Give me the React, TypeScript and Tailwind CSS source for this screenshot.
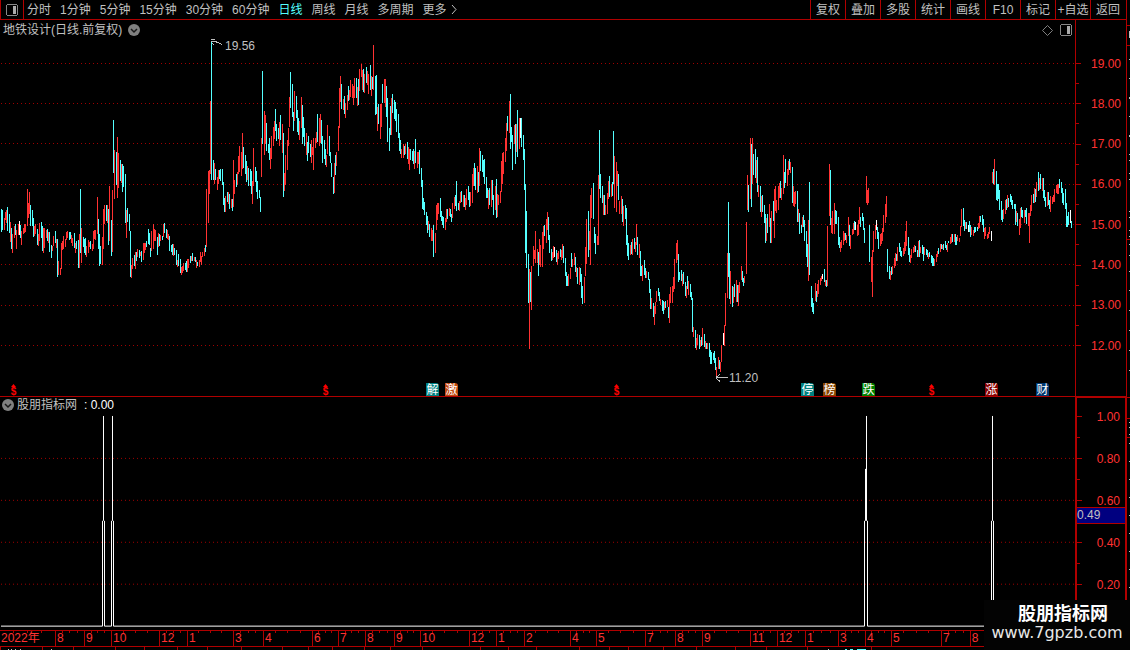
const periods = [
  "分时",
  "1分钟",
  "5分钟",
  "15分钟",
  "30分钟",
  "60分钟",
  "日线",
  "周线",
  "月线",
  "多周期",
];

const tools = ["复权", "叠加", "多股", "统计", "画线", "F10", "标记", "+自选", "返回"];

// start of every labelled month on the time axis
const months: [number, string][] = [
  [0, "2022年"],
  [55, "8"],
  [84, "9"],
  [111, "10"],
  [159, "12"],
  [187, "1"],
  [233, "3"],
  [263, "4"],
  [312, "6"],
  [338, "7"],
  [365, "8"],
  [394, "9"],
  [420, "10"],
  [469, "12"],
  [496, "1"],
  [524, "2"],
  [570, "4"],
  [596, "5"],
  [645, "7"],
  [675, "8"],
  [702, "9"],
  [750, "11"],
  [777, "12"],
  [805, "1"],
  [838, "3"],
  [865, "4"],
  [891, "5"],
  [941, "7"],
  [970, "8"],
];

const priceLabels = ["19.00", "18.00", "17.00", "16.00", "15.00", "14.00", "13.00", "12.00"];
const signalLabels = ["1.00", "0.80", "0.60", "0.40", "0.20"];
const priceGrid = [63, 103, 143, 184, 224, 264, 305, 345];
const signalGrid = [458, 500, 542, 584];

const dividends = [10, 322, 613, 928];

const events = [
  { x: 426, text: "解", color: "bg-[#008080]" },
  { x: 445, text: "激", color: "bg-[#c04810]" },
  { x: 801, text: "停", color: "bg-[#008080]" },
  { x: 823, text: "榜", color: "bg-[#884400]" },
  { x: 862, text: "跌", color: "bg-[#008000]" },
  { x: 985, text: "涨", color: "bg-[#880000]" },
  { x: 1036, text: "财", color: "bg-[#003870]" },
];

// colour, x, high, low (r = up, c = down, w = flat)
const bars = `
c1,209,232 c2,210,230 r4,218,230 r5,212,220 r6,210,223 c7,207,231 c9,214,233 r10,222,242 c11,228,249 r12,234,253
r14,226,238 c15,224,235 r16,230,249 r18,224,235 w19,221,235 c20,225,238 r21,231,245 r23,228,234 r24,224,233 r25,224,232
r27,189,226 r28,203,218 r29,192,214 c30,205,226 c32,210,226 c33,218,237 r34,226,236 r35,224,234 c37,229,245 r38,234,246
r39,223,241 c41,222,238 c42,226,251 r43,228,253 r44,228,248 r46,230,238 c47,229,241 r48,232,243 c49,232,252 c51,245,258
r52,246,251 r53,236,246 c55,231,243 r56,239,248 c57,239,277 r58,261,275 r60,268,275 r61,243,269 r62,241,250 r63,236,249
r65,239,247 r66,232,240 r67,231,238 c69,232,240 c70,232,239 r71,235,243 r72,238,246 c74,233,248 r75,243,253 c76,241,249
c78,240,268 r79,234,268 c80,189,253 r81,228,263 c83,237,247 c84,239,253 c85,238,255 r86,246,257 r88,240,253 r89,242,247
c90,241,249 r92,244,251 r93,231,249 r94,230,239 r95,230,240 r97,197,234 c98,219,249 c99,234,266 c100,246,264 r102,237,265
r103,209,249 r104,205,224 c106,205,221 r107,205,223 c108,209,245 r109,186,241 c111,220,256 r112,190,252 c113,120,173 r114,150,199
c116,152,185 r117,137,198 r118,153,188 c120,160,181 r121,164,183 c122,164,192 c123,166,187 c125,174,223 r126,210,238 c127,208,222
c129,214,231 c130,231,277 r131,265,278 r132,258,269 c134,255,266 r135,252,269 c136,252,261 r137,249,257 c139,250,258 r140,252,256
c141,251,262 r143,243,260 r144,243,253 r145,243,250 c146,241,247 c148,229,244 c149,233,245 c150,248,257 r151,231,251 r153,224,249
r154,229,241 r155,230,241 c157,237,255 r158,233,247 c159,234,246 r160,235,241 c162,236,240 r163,224,237 c164,223,233 c166,229,238
r167,230,239 r168,234,240 c169,236,251 c171,245,252 c172,244,255 r173,244,256 c174,248,255 c176,250,265 r177,260,267 c178,254,266
c180,259,273 r181,267,275 r182,266,273 r183,263,271 c185,263,270 c186,261,272 r187,259,272 r188,259,268 c190,256,263 r191,256,261
c192,253,261 r194,257,261 c195,257,262 r196,260,268 c197,262,266 r199,260,267 r200,252,262 r201,256,265 r202,252,257 r204,248,256
c205,245,252 r206,189,247 r208,171,223 r209,170,194 r210,101,174 c211,42,180 c213,160,180 r214,163,184 c215,169,180 r217,177,190
r218,170,184 c219,170,179 c220,169,181 c222,169,185 c223,182,205 c224,198,212 r225,196,212 c227,192,202 r228,192,204 c229,194,209
r231,199,208 c232,199,211 r233,160,207 r234,180,194 c236,174,187 r237,172,185 r238,156,174 r239,146,172 r241,152,176 r242,133,169
c243,147,168 c245,155,174 c246,161,182 r247,166,180 c248,168,186 c250,169,186 c251,171,194 r252,181,204 r253,148,186 c255,167,182
c256,171,192 c257,181,199 c259,190,198 c260,197,212 r261,138,177 c262,71,144 r264,111,155 r265,115,144 c266,123,151 c268,144,153
c269,138,160 r270,148,169 r271,136,159 r273,127,146 r274,121,139 c275,109,131 c276,124,141 c278,128,139 r279,122,146 c280,115,140
r282,124,153 c283,133,197 r284,173,191 r285,155,185 r287,140,170 r288,128,146 r289,97,127 c290,72,108 c292,84,117 c293,112,131
r294,91,121 c296,96,118 c297,110,132 c298,118,135 r299,121,140 r301,97,128 c302,105,144 c303,117,137 c304,128,146 r306,133,155
c307,142,161 c308,136,153 c310,144,157 r311,140,163 r312,147,155 r313,138,170 r315,138,148 r316,132,143 c317,114,142 r319,118,146
r320,114,143 c321,120,144 c322,136,163 c324,140,159 c325,149,165 r326,155,167 r327,125,154 c329,136,156 c330,152,163 c331,163,177
c333,177,194 r334,163,193 c335,155,175 r336,152,166 r338,126,151 r339,88,128 r340,76,102 c341,84,109 r343,99,110 c344,96,114
r345,103,118 r347,95,110 c348,86,101 r349,90,100 r350,80,97 r352,84,98 r353,86,105 r354,78,98 c356,78,98 r357,87,106
c358,79,105 r359,69,91 r361,64,77 r362,70,90 c363,69,92 r364,74,93 c366,67,83 r367,71,85 r368,74,94 c370,65,90
r371,76,96 c372,77,89 r373,45,90 c375,76,115 c376,75,114 r377,107,131 c378,104,124 r380,104,139 r381,104,127 c382,84,103
r384,79,103 r385,79,107 c386,86,117 c387,98,142 c389,128,151 c390,106,135 r391,98,135 c392,94,113 c394,100,119 c395,102,121
c396,109,132 c398,114,138 c399,133,151 c400,140,154 r401,149,158 r403,144,158 c404,146,155 r405,144,154 c407,142,159 r408,147,164
r409,149,170 c410,149,160 c412,151,161 c413,149,164 r414,151,169 c415,139,163 r417,152,168 r418,152,164 c419,150,174 c421,168,187
c422,180,209 c423,198,210 c424,202,215 c426,212,225 c427,216,233 r428,221,230 c429,224,237 r431,228,241 r432,230,241 c433,225,257
r435,233,253 r436,205,230 r437,203,220 r438,203,214 c440,198,217 c441,211,221 c442,216,225 c443,217,228 r445,218,230 r446,209,222
c447,209,219 r449,208,216 c450,209,217 c451,214,222 r452,203,218 r454,197,209 c455,195,206 c456,181,211 c458,203,210 r459,201,211
r460,192,203 c461,191,202 r463,195,207 c464,195,207 r465,198,210 r466,189,205 c468,186,200 c469,192,207 r470,192,206 r472,174,203
r473,168,186 c474,163,186 c475,168,190 r477,166,193 c478,172,192 r479,148,186 c480,151,171 c482,155,172 c483,160,177 c484,159,184
c486,177,198 c487,188,198 r488,190,209 c489,188,205 r491,180,207 c492,180,200 c493,195,215 r495,186,210 c496,179,218 r497,194,217
r498,195,205 r500,191,203 r501,161,192 r502,153,184 r503,152,174 r505,138,162 r506,123,151 c507,116,131 r509,101,133 c510,94,149
c511,127,142 c512,135,170 r514,125,144 c515,124,164 r516,124,152 c517,110,157 r519,118,149 w520,118,138 c521,118,147 c523,135,160
c524,149,190 c525,184,253 c526,211,268 c528,254,303 r529,269,349 c530,272,302 r531,266,310 r533,246,266 r534,250,259 r535,231,263
r537,249,263 c538,252,276 r539,239,265 r540,245,267 r542,232,267 r543,226,249 c544,225,236 r546,219,243 r547,212,230 c548,217,240
c549,235,253 c551,249,261 r552,252,260 r553,246,258 w554,247,257 c556,250,262 r557,253,265 r558,251,259 c560,249,257 r561,250,260
r562,244,258 c563,246,263 c565,258,276 c566,272,286 c567,276,286 r568,274,286 r570,268,279 c571,253,267 r572,259,267 r574,253,265
c575,257,272 r576,267,277 c577,268,284 r579,267,285 c580,268,282 c581,274,298 c582,286,304 r584,277,303 r585,247,276 r586,219,264
c588,211,257 r589,231,250 r590,195,265 r591,188,218 c593,183,219 c594,227,243 c595,234,254 r597,236,245 r598,175,245 c599,130,189
c600,174,198 c602,186,203 r603,195,215 c604,195,215 r605,205,215 r607,193,214 r608,181,199 c609,176,197 r611,184,197 c612,182,196
c613,131,184 r614,156,208 r616,162,212 r617,171,186 c618,174,200 r619,201,214 r621,196,214 c622,199,222 r623,206,226 c625,205,219
c626,208,245 c627,235,256 c628,243,260 r630,245,255 c631,242,254 r632,239,255 c634,238,249 r635,242,252 r636,224,245 c637,237,255
r639,244,258 c640,251,276 c641,266,276 r642,265,281 c644,260,275 c645,268,278 r646,271,278 c648,272,280 c649,279,293 c650,289,309
r651,298,309 c653,303,317 r654,306,325 r655,302,314 r656,291,302 c658,288,296 c659,292,301 r660,299,305 c662,300,311 c663,301,314
r664,302,310 c665,301,308 r667,300,307 c668,307,318 r669,294,323 r670,287,303 r672,286,303 r673,277,292 r674,259,289 r676,243,263
r677,240,260 c678,254,282 c679,272,280 c681,270,281 r682,274,286 c683,272,284 c685,282,296 r686,286,298 c687,276,289 r688,281,295
c690,284,297 c691,292,300 c692,298,332 r693,327,337 c695,330,348 r696,338,350 r697,334,345 c699,335,349 r700,340,347 c701,337,346
r702,328,345 c704,334,347 r705,341,349 c706,343,349 r707,343,349 c709,343,357 c710,350,364 c711,352,364 c713,353,360 c714,351,363
c715,358,370 r716,367,378 r718,357,369 c719,360,369 r720,362,372 r721,345,362 w723,333,345 r724,325,346 r725,293,326 r727,253,298
c728,202,277 c729,253,299 r730,271,304 c732,286,307 r733,287,303 c734,284,297 r736,280,302 c737,285,302 r738,285,306 r739,282,293
r741,266,280 c742,271,282 c743,278,286 r744,276,283 r746,222,274 r747,175,210 c748,185,212 r750,138,199 c751,144,207 r752,138,184
c753,154,175 c755,149,178 r756,160,183 c757,157,192 r758,185,197 c760,186,212 r761,196,217 c762,195,212 c764,205,223 c765,214,243
r766,218,241 c767,214,233 r769,204,227 c770,218,243 r771,211,243 c773,201,221 r774,189,238 r775,186,211 r776,200,213 r778,186,210
r779,183,198 c780,181,198 r781,188,200 r783,155,194 c784,172,188 c785,159,183 r787,169,186 r788,161,175 c789,159,170 r790,162,173
c792,167,203 r793,186,206 r794,192,207 r795,191,204 c797,191,222 r798,209,222 c799,213,234 c801,225,233 r802,217,227 c803,215,227
c804,220,241 c806,231,257 c807,244,267 r808,220,281 c809,182,275 c811,286,307 c812,298,312 c813,303,314 r815,283,301 c816,291,302
r817,284,297 r818,280,294 r820,278,285 r821,276,281 w822,274,279 c824,269,282 r825,280,286 c826,280,287 r827,226,286 r829,164,216
c830,170,225 r831,218,233 r832,211,234 r834,203,234 c835,210,224 c836,211,224 c838,217,245 c839,237,248 r840,242,252 r841,240,248
r843,231,245 r844,233,241 c845,233,240 r846,235,243 r848,217,236 c849,225,246 r850,235,249 r852,229,235 r853,223,234 c854,221,230
w855,222,230 r857,225,236 r858,220,235 r859,207,224 c860,217,227 c862,213,221 c863,217,230 c864,228,243 r866,176,203 r867,190,205
r868,188,203 c869,225,262 r871,257,282 r872,250,297 r873,231,252 r875,225,239 w876,220,230 c877,227,239 c878,232,249 r880,234,246
r881,233,244 r882,228,241 r883,215,232 r885,204,223 r886,196,217 c887,249,272 c889,266,279 r890,271,280 c891,267,275 r892,266,274
r894,258,268 r895,253,266 c896,254,261 r897,247,261 c899,243,252 c900,247,256 c901,251,257 r903,248,256 r904,242,254 r905,231,251
r906,221,246 c908,237,255 c909,248,262 r910,255,263 r911,249,258 r913,247,253 r914,245,252 c915,246,252 c917,250,257 r918,241,257
c919,240,257 r920,247,253 c922,245,254 c923,247,261 r924,247,255 c926,249,255 c927,250,257 r928,253,259 c929,252,257 c931,255,263
c932,256,266 c933,258,266 r934,259,266 r936,254,262 r937,251,257 c938,248,254 r940,244,252 c941,244,249 r942,245,249 c943,244,250
c945,241,248 c946,245,250 r947,243,252 c948,241,243 r950,237,244 r951,234,243 c952,234,242 r954,234,242 c955,234,245 c956,237,245
r957,235,241 r959,238,242 r960,226,236 r961,209,227 c963,208,226 c964,220,231 r965,222,229 c966,222,229 w968,225,232 c969,221,232
c970,225,237 r971,227,235 r973,230,236 c974,227,233 c975,227,232 c977,227,231 r978,223,229 r979,216,228 c980,216,222 c982,215,225
c983,219,232 r984,228,239 r985,227,236 r987,234,239 r988,232,238 r989,227,234 w991,231,241 r992,172,183 c993,169,184 r994,159,185
c996,171,200 c997,184,201 c998,184,199 c999,190,210 c1001,201,220 c1002,210,222 r1003,209,219 r1005,200,214 c1006,199,210 r1007,195,208
c1008,198,207 c1010,194,202 c1011,196,205 c1012,200,209 c1014,204,209 c1015,204,225 r1016,211,222 c1017,213,226 r1019,219,235 r1020,208,228
c1021,207,217 c1022,210,218 r1024,210,223 c1025,210,217 c1026,208,224 r1028,213,226 r1029,213,243 r1030,205,216 r1031,195,211 c1033,194,203
r1034,188,203 c1035,189,202 r1036,182,197 c1038,172,191 r1039,178,190 c1040,174,189 r1042,178,191 c1043,178,198 c1044,190,201 c1045,197,207
r1047,192,206 c1048,192,205 c1049,200,209 r1050,196,212 r1052,197,204 r1053,195,202 r1054,189,202 r1056,185,193 r1057,184,194 r1058,184,194
c1059,179,188 c1061,182,193 c1062,188,203 c1063,193,205 c1065,189,209 c1066,203,227 c1067,216,227 c1068,212,225 w1070,210,223 c1071,221,228
`;

const barPath = (color: string) =>
  bars
    .trim()
    .split(/\s+/)
    .filter((b) => b[0] === color)
    .map((b) => {
      const [x, top, bottom] = b.slice(1).split(",").map(Number);
      return `M${x} ${top}h1V${bottom}h-1z`;
    })
    .join("");

const percent = (x: number, total = 1075) => `${(x / total) * 100}%`;

const GridLines = ({ rows }: { rows: number[] }) => (
  <g stroke="#a00000" strokeDasharray="1 3">
    {rows.map((y) => (
      <path key={y} d={`M1 ${y + 0.5}H1075`} />
    ))}
  </g>
);

const PanelIcon = () => (
  <svg width="12" height="12" shapeRendering="crispEdges">
    <path d="M1 0h10v1h1v10h-1v1H1v-1H0V1h1z" fill="#888" />
    <path d="M1 1h10v10H1z" fill="#000" />
    <path d="M7 2h3v8H7z" fill="#aaa" />
  </svg>
);

const ChevronBadge = () => (
  <svg width="12" height="12" viewBox="0 0 12 12">
    <circle cx="6" cy="6" r="6" fill="#808080" />
    <path d="M3 5l3 3 3-3" fill="none" stroke="#181818" strokeWidth="1.5" />
  </svg>
);

const Scale = ({ labels }: { labels: string[] }) => (
  <>
    {labels.map((label, i) => (
      <div key={label} className="contents">
        {i > 0 && <div className="h-px w-[3px] bg-[#b00000]" />}
        <div className="flex h-px items-center justify-between">
          <span className="h-px w-[5px] bg-[#b00000]" />
          <span className="pr-[5px]">{label}</span>
        </div>
      </div>
    ))}
  </>
);

const Toolbar = () => (
  <header className="flex h-5 shrink-0 items-stretch justify-between border-b border-[#b00000]">
    <nav className="flex items-center">
      <button
        aria-label="侧栏"
        className="mr-[3px] flex h-full w-6 items-center justify-center border-x border-[#b00000]"
      >
        <PanelIcon />
      </button>
      <div className="flex gap-[9px]">
        {periods.map((p) => (
          <button key={p} className={p === "日线" ? "text-[#54ffff]" : ""}>
            {p}
          </button>
        ))}
        <button className="flex items-center gap-1">
          更多
          <svg width="6" height="9" fill="none" stroke="#c0c0c0">
            <path d="M1 0l4 4.500-4 4.500" />
          </svg>
        </button>
      </div>
    </nav>
    <nav className="flex pr-px">
      {tools.map((t) => (
        <button key={t} className="w-[35px] whitespace-nowrap border-l border-[#b00000]">
          {t}
        </button>
      ))}
    </nav>
  </header>
);

const PricePane = () => (
  <section className="flex min-h-0 flex-[377] border-b border-[#b00000]">
    <div className="relative min-w-0 flex-1">
      <svg
        className="absolute inset-0 h-full w-full"
        viewBox="0 20 1075 376"
        preserveAspectRatio="none"
        shapeRendering="crispEdges"
      >
        <GridLines rows={priceGrid} />
        <path d={barPath("r")} fill="#ff3232" />
        <path d={barPath("c")} fill="#54ffff" />
        <path d={barPath("w")} fill="#fff" />
        <g fill="none" stroke="#c0c0c0">
          <path d="M211 39.500h4M211 41.500h5M212 43l2 2M215 41.500l3 1 4 2" />
          <path d="M716 377.500h12M716 377l4-3M716 378l4 3" />
        </g>
      </svg>
      <div className="absolute inset-x-0 top-0 flex h-5 items-center justify-between px-[3px]">
        <h1 className="flex items-center gap-1.5">
          地铁设计(日线.前复权)
          <ChevronBadge />
        </h1>
        <div className="flex items-center gap-[7px]">
          <svg width="11" height="11" fill="none" stroke="#808080">
            <path d="M5.500 .5l5 5-5 5-5-5z" />
          </svg>
          <PanelIcon />
        </div>
      </div>
      <span className="absolute top-[18px]" style={{ left: percent(225) }}>
        19.56
      </span>
      <span className="absolute bottom-[10px]" style={{ left: percent(729) }}>
        11.20
      </span>
      {dividends.map((x) => (
        <span
          key={x}
          className="absolute bottom-0 flex w-[7px] flex-col items-center text-[10px] font-bold leading-[9px] text-[#ff0000]"
          style={{ left: percent(x) }}
        >
          <svg width="5" height="3" fill="#ff0000">
            <path d="M2.500 0L5 3H0z" />
          </svg>
          $
        </span>
      ))}
      {events.map((e) => (
        <span
          key={e.x}
          className={`absolute bottom-0 flex h-[13px] w-[13px] items-center justify-center rounded-tr-[3px] text-white ${e.color}`}
          style={{ left: percent(e.x) }}
        >
          {e.text}
        </span>
      ))}
    </div>
    <div className="flex w-[51px] flex-col justify-between border-l border-[#b00000] pb-[50px] pt-[43px] text-[#ff3232]">
      <Scale labels={priceLabels} />
    </div>
  </section>
);

const SignalPane = () => (
  <section className="flex min-h-0 flex-[233]">
    <div className="relative min-w-0 flex-1">
      <svg
        className="absolute inset-0 h-full w-full"
        viewBox="0 397 1075 233"
        preserveAspectRatio="none"
        shapeRendering="crispEdges"
      >
        <GridLines rows={signalGrid} />
        <g fill="none" stroke="#fff">
          <path d="M1 626.500H102.500V521M103.500 416V521M104.500 521V626.500H111.500V521M112.500 416V521M113.500 521V626.500H864.500V521" />
          <path d="M866.500 416V521M865.500 469V521M867.500 521V626.500H991.500V521M992.500 416V521M993.500 521V626.500H1075" />
        </g>
      </svg>
      <h2 className="absolute left-0.5 top-0 flex items-center gap-[3px]">
        <ChevronBadge />
        股朋指标网
        <span className="pl-1 text-white">: 0.00</span>
      </h2>
    </div>
    <div className="relative flex w-[51px] flex-col justify-between border-l-2 border-r border-t border-[#b00000] pb-[45px] pt-[18px] text-[#ff3232]">
      <Scale labels={signalLabels} />
      <span className="absolute inset-x-0 top-[109px] h-[17px] border-y border-[#b00000] bg-[#000080] leading-[15px] text-[#c0c0c0]">
        0.49
      </span>
    </div>
  </section>
);

const TimeAxis = () => (
  <div className="flex h-[17px] shrink-0 border-y border-[#b00000] text-[#ff3232]">
    {months.map(([x, label], i) => (
      <div
        key={x}
        className={`relative whitespace-nowrap pl-px leading-[15px] ${i > 0 ? "border-l border-[#b00000]" : ""}`}
        style={{ width: percent((months[i + 1]?.[0] ?? 1126) - x, 1126) }}
      >
        <div className="absolute inset-x-0 top-0 flex justify-evenly">
          <span className="h-0.5 w-px bg-[#b00000]" />
          <span className="h-0.5 w-px bg-[#b00000]" />
          <span className="h-0.5 w-px bg-[#b00000]" />
        </div>
        {label}
      </div>
    ))}
  </div>
);

const App = () => {
  return (
    <div className="relative flex h-screen overflow-hidden bg-black font-['Liberation_Sans','Noto_Sans_CJK_SC',sans-serif] text-[12px] leading-[16px] text-[#c0c0c0]">
      <main className="flex min-w-0 flex-1 flex-col">
        <Toolbar />
        <PricePane />
        <SignalPane />
        <TimeAxis />
        <svg className="h-[3px] w-full shrink-0" shapeRendering="crispEdges">
          <path
            d="M0 0v3M42 0v3M73 0v3M115 0v3M144 0v3M177 0v3M207 0v3M241 0v3M282 0v3M308 0v3M332 0v3M364 0v3M390 0v3M422 0v3M480 0v3M508 0v3M536 0v3M579 0v3M609 0v3M628 0v3M663 0v3M696 0v3M735 0v3M766 0v3M807 0v3M871 0v3"
            stroke="#b00000"
          />
          <path d="M8 2h1v1h-1zM11 2h1v1h-1zM15 2h1v1h-1zM20 2h1v1h-1zM51 2h1v1h-1zM828 2h1v1h-1z" fill="#c0c0c0" />
          <path d="M845 2h2v1h-2zM850 2h3v1h-3zM857 2h9v1h-9z" fill="#54ffff" />
        </svg>
      </main>
      <aside className="w-1 border-l border-[#b00000]">
        <svg className="h-full w-full" shapeRendering="crispEdges">
          <path d="M0 25.500h3M0 45.500h3M0 239.500h3M0 397.500h3M0 418.500h3M0 437.500h3" stroke="#b00000" />
          <path
            d="M2.500 31v7M2.500 59v1M2.500 78v1M2.500 97v2M2.500 116v1M2.500 135v2M2.500 154v1M2.500 160v1M2.500 173v1M2.500 179v1M2.500 211v1M2.500 217v1M2.500 230v1M2.500 236v1M2.500 244v1M2.500 255v1M2.500 271v1M2.500 290v1M2.500 310v1M2.500 330v1M2.500 350v1M2.500 370v1M2.500 422v1M2.500 427v1M2.500 434v1M2.500 443v1M2.500 461v1M2.500 479v1M2.500 497v1M2.500 515v1M2.500 533v1M2.500 551v1M2.500 569v1M2.500 587v1"
            stroke="#c0c0c0"
          />
        </svg>
      </aside>
      <footer className="absolute bottom-0 right-0 flex h-[50px] w-[146px] flex-col items-center bg-[#030303] pt-1">
        <strong className="pl-3 text-[18px] leading-[20px] text-white">股朋指标网</strong>
        <a
          href="#"
          className="font-['DejaVu_Sans',sans-serif] text-[16px] leading-[18px] text-[#e8e8e8]"
        >
          www.7gpzb.com
        </a>
      </footer>
    </div>
  );
};

export default App;
